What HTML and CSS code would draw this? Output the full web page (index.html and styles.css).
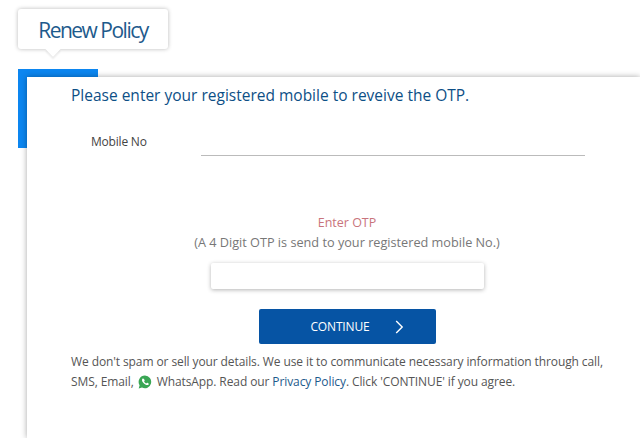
FILE: index.html
```html
<!DOCTYPE html>
<html lang="en">
<head>
<meta charset="UTF-8">
<meta name="viewport" content="width=device-width, initial-scale=1.0">
<title>Renew Policy</title>
<link rel="stylesheet" href="styles.css">
</head>
<body>

<div class="tip">Renew Policy</div>

<div class="panel">
  <div class="card">
    <h2 class="title">Please enter your registered mobile to reveive the OTP.</h2>

    <div class="mobile-row">
      <label class="mobile-label" for="mobile">Mobile No</label>
      <input class="mobile-input" id="mobile" type="text">
    </div>

    <div class="otp">
      <div class="otp-title">Enter OTP</div>
      <div class="otp-note">(A 4 Digit OTP is send to your registered mobile No.)</div>
      <input class="otp-input" type="text">
      <button class="continue" type="button">
        <span>CONTINUE</span>
        <svg width="9" height="14" viewBox="0 0 9 14"><path d="M1.2 1 L7.2 7 L1.2 13" fill="none" stroke="#fff" stroke-width="1.4"/></svg>
      </button>
    </div>

    <p class="terms">
      We don't spam or sell your details. We use it to communicate necessary information through call,<br>
      SMS, Email,
      <svg class="wa" width="14" height="14" viewBox="0 0 14 14">
        <path d="M7 .6a6.3 6.3 0 0 0-5.4 9.6L.7 13.4l3.3-.9A6.3 6.3 0 1 0 7 .6z" fill="#3aa655"/>
        <path d="M4.9 3.6c-.3 0-.9.5-.9 1.500 0 2.300 3 5 5.200 5 .9 0 1.600-.7 1.600-1.200 0-.4-1.300-1.100-1.600-1.100-.3 0-.6.7-.9.7-.6 0-2-1.300-2.200-2 0-.3.600-.6.600-.9 0-.4-.6-1.800-1.800-2z" fill="#fff"/>
      </svg>
      WhatsApp. Read our <a class="link" href="#">Privacy Policy</a>. Click 'CONTINUE' if you agree.
    </p>
  </div>
</div>

</body>
</html>
```

FILE: styles.css
```css
body {
  margin: 0;
  height: 438px;
  overflow: hidden;
  background-color: #fff;
  font-family: "Open Sans", Arial, sans-serif;
  color: #555;
}
.tip {
  position: relative;
  box-sizing: border-box;
  width: 150px;
  height: 40px;
  margin: 9px 0 0 18px;
  background-color: #fff;
  border-radius: 3px;
  box-shadow: 0 0 4px rgba(0,0,0,0.28);
  color: #1d5a8c;
  font-size: 21px;
  line-height: 42px;
  text-align: center;
  letter-spacing: -1.5px;
}
.tip::after {
  content: "";
  position: absolute;
  left: 29px;
  bottom: -6px;
  width: 12px;
  height: 12px;
  background-color: #fff;
  transform: rotate(45deg) scale(0.9);
  box-shadow: 2px 2px 2px rgba(0,0,0,0.08);
}
.panel {
  position: relative;
  margin-top: 20px;
  padding: 8px 0 0 27px;
}
.panel::before {
  content: "";
  position: absolute;
  left: 18px;
  top: 0;
  width: 80px;
  height: 79px;
  background-color: #0c86f0;
}
.card {
  position: relative;
  height: 361px;
  padding: 0 0 0 44px;
  background-color: #fff;
  box-shadow: 0 0 6px rgba(0,0,0,0.35);
}
.title {
  margin: 0;
  padding-top: 8px;
  font-size: 15.5px;
  line-height: 20px;
  font-weight: 400;
  color: #0d4f86;
}
.mobile-row {
  display: flex;
  align-items: flex-end;
  margin-top: 21px;
}
.mobile-label {
  width: 130px;
  padding: 0 0 6px 20px;
  box-sizing: border-box;
  font-size: 12px;
  letter-spacing: -0.2px;
  color: #444;
}
.mobile-input {
  width: 384px;
  height: 30px;
  padding: 0;
  border: none;
  border-bottom: 1px solid #bbb;
  outline: none;
  box-sizing: border-box;
}
.otp {
  display: flex;
  flex-direction: column;
  align-items: center;
  width: 552px;
  margin-top: 57px;
}
.otp-title {
  font-size: 12.5px;
  line-height: 19px;
  color: #c9747c;
}
.otp-note {
  font-size: 12.7px;
  line-height: 20px;
  color: #777;
}
.otp-input {
  width: 273px;
  height: 26px;
  margin-top: 11px;
  padding: 0;
  border: none;
  border-radius: 2px;
  box-sizing: border-box;
  outline: none;
  box-shadow: 0 1px 4px rgba(0,0,0,0.3);
}
.continue {
  display: flex;
  align-items: center;
  justify-content: center;
  gap: 25px;
  width: 177px;
  height: 35px;
  margin-top: 20px;
  padding: 0 0 0 20px;
  border: none;
  border-radius: 2px;
  background-color: #0654a4;
  color: #fff;
  font-family: inherit;
  font-size: 12px;
  letter-spacing: -0.15px;
}
.terms {
  margin: 8px 0 0;
  font-size: 12px;
  line-height: 20px;
  letter-spacing: -0.1px;
  color: #555;
  white-space: nowrap;
}
.wa {
  margin: 0 2px 0 1px;
  vertical-align: -3px;
}
.link {
  color: #1d5a8c;
  text-decoration: none;
}
```
